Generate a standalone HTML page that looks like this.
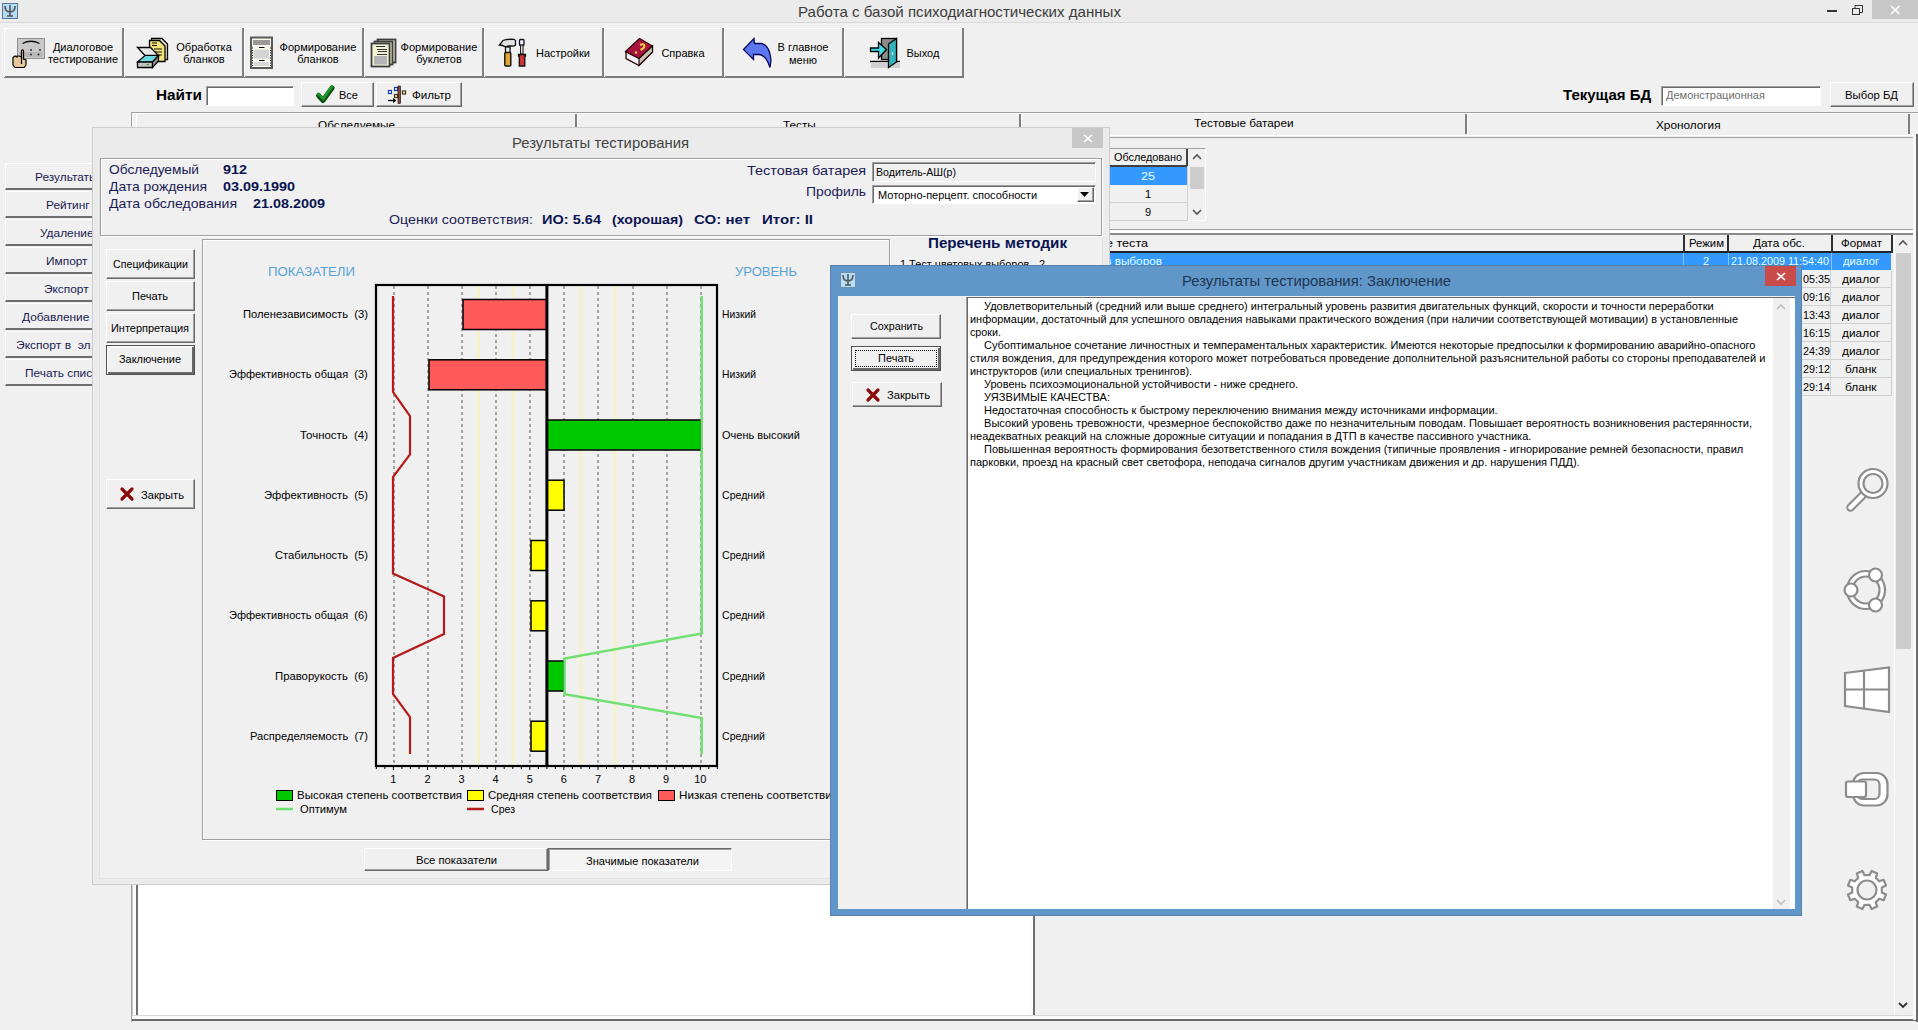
<!DOCTYPE html><html><head><meta charset="utf-8"><style>
*{margin:0;padding:0;box-sizing:border-box}
html,body{width:1918px;height:1030px;overflow:hidden;background:#f0f0f0;font-family:"Liberation Sans",sans-serif;position:relative}
.t{position:absolute;white-space:pre;line-height:20px;transform-origin:0 0}
.btn{position:absolute;background:#f0f0f0;border:1px solid;border-color:#fff #696969 #696969 #fff;box-shadow:inset -1px -1px 0 #a0a0a0}
.sunk{position:absolute;border:1px solid;border-color:#a0a0a0 #fff #fff #a0a0a0;box-shadow:inset 1px 1px 0 #696969}
svg{position:absolute;overflow:visible}
</style></head><body><div style="position:absolute;left:0px;top:0px;width:1918px;height:23px;background:#ebebeb;border-bottom:1px solid #d9d9d9"></div><div style="position:absolute;left:2px;top:3px;width:16px;height:16px;background:#b3dcf7;border:1px solid #55789a"></div><svg style="left:3px;top:4px" width="14" height="14" viewBox="0 0 14 14"><path d="M2 2 Q2 8 7 8 Q12 8 12 2 M7 1 V12 M4 12 H10" stroke="#555" stroke-width="1.6" fill="none"/></svg><div class="t" style="left:797.5px;top:1.5px;font-size:15px;color:#3c3c3c;transform:scaleX(1.0055);">Работа с базой психодиагностических данных</div><div style="position:absolute;left:1827px;top:10px;width:10px;height:2px;background:#333"></div><svg style="left:1852px;top:5px" width="11" height="11"><rect x="0.5" y="3.5" width="7" height="6" fill="none" stroke="#333"/><path d="M3 3.5 V0.5 H10.5 V7.5 H8" fill="none" stroke="#333"/></svg><div style="position:absolute;left:1872px;top:0px;width:46px;height:19px;background:#c7c7c7"></div><svg style="left:1890px;top:5px" width="11" height="10"><path d="M1 1 L9.5 9 M9.5 1 L1 9" stroke="#fff" stroke-width="1.7"/></svg><div style="position:absolute;left:4px;top:28px;width:960px;height:50px;background:#f0f0f0;border-top:1px solid #fff;border-bottom:2px solid #7a7a7a"></div><div style="position:absolute;left:4px;top:28px;width:1px;height:49px;background:#fff"></div><div style="position:absolute;left:122px;top:28px;width:2px;height:49px;background:#7f7f7f"></div><div style="position:absolute;left:124px;top:28px;width:1px;height:49px;background:#fff"></div><div style="position:absolute;left:242px;top:28px;width:2px;height:49px;background:#7f7f7f"></div><div style="position:absolute;left:244px;top:28px;width:1px;height:49px;background:#fff"></div><div style="position:absolute;left:362px;top:28px;width:2px;height:49px;background:#7f7f7f"></div><div style="position:absolute;left:364px;top:28px;width:1px;height:49px;background:#fff"></div><div style="position:absolute;left:482px;top:28px;width:2px;height:49px;background:#7f7f7f"></div><div style="position:absolute;left:484px;top:28px;width:1px;height:49px;background:#fff"></div><div style="position:absolute;left:602px;top:28px;width:2px;height:49px;background:#7f7f7f"></div><div style="position:absolute;left:604px;top:28px;width:1px;height:49px;background:#fff"></div><div style="position:absolute;left:722px;top:28px;width:2px;height:49px;background:#7f7f7f"></div><div style="position:absolute;left:724px;top:28px;width:1px;height:49px;background:#fff"></div><div style="position:absolute;left:842px;top:28px;width:2px;height:49px;background:#7f7f7f"></div><div style="position:absolute;left:844px;top:28px;width:1px;height:49px;background:#fff"></div><div style="position:absolute;left:962px;top:28px;width:2px;height:49px;background:#7f7f7f"></div><div class="t" style="left:52.9px;top:36.5px;font-size:11px;color:#000;">Диалоговое</div><div class="t" style="left:47.9px;top:48.5px;font-size:11px;color:#000;">тестирование</div><div class="t" style="left:176.3px;top:36.5px;font-size:11px;color:#000;">Обработка</div><div class="t" style="left:183.3px;top:48.5px;font-size:11px;color:#000;">бланков</div><div class="t" style="left:279.6px;top:36.5px;font-size:11px;color:#000;">Формирование</div><div class="t" style="left:297.3px;top:48.5px;font-size:11px;color:#000;">бланков</div><div class="t" style="left:400.6px;top:36.5px;font-size:11px;color:#000;">Формирование</div><div class="t" style="left:416.2px;top:48.5px;font-size:11px;color:#000;">буклетов</div><div class="t" style="left:536.0px;top:42.5px;font-size:11px;color:#000;">Настройки</div><div class="t" style="left:661.4px;top:42.5px;font-size:11px;color:#000;">Справка</div><div class="t" style="left:777.6px;top:36.5px;font-size:11px;color:#000;">В главное</div><div class="t" style="left:789.0px;top:49.5px;font-size:11px;color:#000;">меню</div><div class="t" style="left:906.5px;top:42.5px;font-size:11px;color:#000;">Выход</div><svg style="left:0;top:0" width="1918" height="100">
<!-- 1 meter + hand -->
<rect x="17.5" y="38.5" width="27" height="20" fill="#c9c9c9" stroke="#8f8f8f"/>
<rect x="19" y="52" width="24" height="5" fill="#b8b8b8"/>
<path d="M22.5 43.5 Q31 39 39.5 43.5" stroke="#111" stroke-width="1.3" fill="none"/>
<circle cx="31" cy="50" r="0.9" fill="#222"/><circle cx="40" cy="50" r="0.9" fill="#222"/>
<circle cx="31" cy="54.5" r="0.9" fill="#222"/><circle cx="38.5" cy="54.5" r="0.9" fill="#222"/>
<path d="M21.5 64 V50.5 Q22.5 49 23.5 50.5 V59 L26 60 V65 L24 67.5 H15 L13 65 V57.5 L15 56 L17 57 V56 L19 56 L21.5 57" fill="#e9c99a" stroke="#000" stroke-width="1.2"/>
<!-- 2 scanner + papers -->
<path d="M151.5 38.5 H162 L167.5 44 V59.5 H151.5 Z" fill="#e6e6c8" stroke="#000" stroke-width="1.3"/>
<path d="M149.5 40.5 H159.5 L165 46 V61.5 H149.5 Z" fill="#f2e47a" stroke="#000" stroke-width="1.3"/>
<path d="M152 43 H157 M152 45.5 H157 M154 49 H162 M154 52 H162 M158 55 H162" stroke="#111" stroke-width="1.1"/>
<path d="M137.5 47.5 H150.5 L158.5 55.5 H145 Z" fill="#e8e8e8" stroke="#000" stroke-width="1.3"/>
<path d="M145 55.5 H158.5 L152.5 62 H137.5 Z" fill="#6ad9e0" stroke="#000" stroke-width="1.2"/>
<path d="M137.5 62 H152.5 V67.5 H137.5 Z" fill="#c4c4c4" stroke="#000" stroke-width="1.3"/>
<path d="M152.5 62 L158.5 55.5 V61 L152.5 67.5 Z" fill="#909090" stroke="#000" stroke-width="1.2"/>
<rect x="146.5" y="64" width="2.5" height="1.2" fill="#3a3"/>
<!-- 3 blank form -->
<rect x="251" y="37.5" width="21" height="30.5" fill="#fbf8ef" stroke="#5a5a5a" stroke-width="2"/>
<rect x="253" y="40" width="17" height="5" fill="#9a9a9a"/>
<rect x="253.5" y="49.5" width="15.5" height="9" fill="#d4d4d4"/>
<rect x="253.5" y="62" width="15.5" height="4" fill="#d8d8d8"/>
<path d="M259 47.5 H264.5 M259 60.5 H264.5" stroke="#000" stroke-width="1.2"/>
<path d="M252.5 47.5 V66 M270.5 47.5 V66" stroke="#000" stroke-width="1" stroke-dasharray="1,1.5"/>
<!-- 4 booklets -->
<rect x="377.5" y="39.5" width="18" height="23" fill="#eef0d0" stroke="#3e3e3e" stroke-width="1.8"/>
<rect x="374.5" y="41.5" width="18" height="23" fill="#e4e8b8" stroke="#3e3e3e" stroke-width="1.8"/>
<rect x="371.5" y="43.5" width="18" height="23" fill="#f3f3d6" stroke="#3e3e3e" stroke-width="1.8"/>
<path d="M376 46.5 H385 M377 49.5 H387 M378 51.5 H387 M377 54.5 H387" stroke="#333" stroke-width="1"/>
<rect x="374" y="56" width="13" height="8.5" fill="#b4b4b4"/>
<!-- 5 tools -->
<path d="M499.5 45 L503 40.5 Q506 39 514 39.3 L515.5 40.5 V45 Q514 46.5 512 46 L508 46 L506 47 Q502 45 499.5 45 Z" fill="#e2e2e2" stroke="#111" stroke-width="1.3"/>
<rect x="505.5" y="47" width="4.5" height="6" fill="#eee" stroke="#111" stroke-width="1.3"/>
<rect x="504.8" y="52.5" width="6" height="13.5" rx="1" fill="#e4a634" stroke="#111" stroke-width="1.4"/>
<rect x="519.5" y="39.5" width="4.5" height="6" rx="1" fill="#eef" stroke="#111" stroke-width="1.3"/>
<rect x="520.6" y="45" width="2.4" height="9" fill="#fff" stroke="#111" stroke-width="1.1"/>
<path d="M518.5 54.5 H525.5 V56 H524.8 V66 H519.3 V56 H518.5 Z" fill="#cf3232" stroke="#111" stroke-width="1.3"/>
<!-- 6 book -->
<path d="M625.5 51.5 L639.5 38.5 L652.5 46 L639 58.5 Z" fill="#a8123e" stroke="#300" stroke-width="1.2"/>
<path d="M626 52 L639 58.5 L652.5 46 V52 L639 65.5 L626 58.5 Z" fill="#f4f0f8" stroke="#200" stroke-width="1.3"/>
<path d="M639 58.5 L652.5 46 V52 L639 65.5 Z" fill="#c8c0b0" stroke="#200" stroke-width="1.1"/>
<path d="M640 45 Q644 43 644.5 46 Q644 48.5 640.5 50" stroke="#f0d040" stroke-width="2" fill="none"/>
<circle cx="636" cy="52.5" r="1.2" fill="#f0d040"/>
<!-- 7 arrow -->
<path d="M743.5 49.5 L754 38.5 L754.5 43.5 H761.5 Q769.5 45 771 60 L770 67.5 Q766 55 759 54.5 H753.5 L753.5 59.5 Z" fill="#5b78f0" stroke="#0a0a60" stroke-width="1.3"/>
<!-- 8 door -->
<path d="M870 61.5 H900" stroke="#000" stroke-width="1.4"/>
<rect x="871" y="62" width="29" height="6" fill="#d0d0d0"/>
<rect x="881.5" y="38.5" width="15" height="21" fill="#8c8c8c" stroke="#000" stroke-width="1.3"/>
<path d="M888.5 44 L896.5 38.5 V62 L888.5 67.5 Z" fill="#35b4bc" stroke="#000" stroke-width="1.3"/>
<circle cx="892.5" cy="53.5" r="0.9" fill="#fff"/>
<path d="M870.5 48 H878.5 V42.5 L886.5 49.5 L878.5 58 V51.5 H870.5 Z" fill="#44dbe6" stroke="#000" stroke-width="1.3"/>
</svg><div class="t" style="left:156.0px;top:84.5px;font-size:15px;font-weight:bold;color:#000;transform:scaleX(1.0230);">Найти</div><div class="sunk" style="left:206px;top:86px;width:88px;height:20px;background:#fff;"></div><div class="btn" style="left:301px;top:82px;width:73px;height:25px;"></div><svg style="left:0;top:0" width="480" height="110"><path d="M318.5 95.5 L323 100.5 L332 88" stroke="#0c4f14" stroke-width="5" fill="none" stroke-linecap="round" stroke-linejoin="round"/><path d="M318.5 94 L323 99 L332 86.5" stroke="#1c9a2c" stroke-width="2.6" fill="none" stroke-linecap="round" stroke-linejoin="round"/></svg><div class="t" style="left:339.0px;top:84.5px;font-size:11px;color:#000;">Все</div><div class="btn" style="left:376px;top:82px;width:86px;height:25px;"></div><svg style="left:0;top:0" width="480" height="110"><rect x="388.5" y="90.5" width="3" height="3" fill="#fff" stroke="#1a3ab0" stroke-width="1.2"/><rect x="394.5" y="87.5" width="3" height="3" fill="#fff" stroke="#1a3ab0" stroke-width="1.2"/><rect x="394.5" y="94.5" width="3" height="3" fill="#fff" stroke="#403000" stroke-width="1.2"/><rect x="402.5" y="91" width="3" height="3" fill="#fff" stroke="#403000" stroke-width="1.2"/><rect x="398" y="86" width="2.5" height="17.5" fill="#8a4a3a" stroke="#000" stroke-width="0.6"/><path d="M388 100.5 H395" stroke="#000" stroke-width="1.3"/><path d="M393 98 L396.5 100.5 L393 103 Z" fill="#000"/></svg><div class="t" style="left:412.0px;top:84.5px;font-size:11px;color:#000;transform:scaleX(1.0554);">Фильтр</div><div class="t" style="left:1563.0px;top:84.5px;font-size:15px;font-weight:bold;color:#000;">Текущая БД</div><div class="sunk" style="left:1661px;top:86px;width:160px;height:20px;background:#fff;"></div><div class="t" style="left:1666.0px;top:84.5px;font-size:11px;color:#6d6d6d;">Демонстрационная</div><div class="btn" style="left:1830px;top:82px;width:84px;height:25px;"></div><div class="t" style="left:1845.0px;top:84.5px;font-size:11px;color:#000;transform:scaleX(1.0291);">Выбор БД</div><div style="position:absolute;left:131px;top:112px;width:1787px;height:910px;border-top:1px solid #a0a0a0;border-left:1px solid #a0a0a0;background:#f0f0f0"></div><div style="position:absolute;left:132px;top:113px;width:1786px;height:908px;border-top:1px solid #fff;border-left:1px solid #fff"></div><div style="position:absolute;left:136px;top:114px;width:441px;height:20px;border-left:1px solid #fff;border-right:2px solid #7f7f7f;"></div><div class="t" style="left:318.0px;top:114.5px;font-size:11px;color:#000;transform:scaleX(1.0700);">Обследуемые</div><div style="position:absolute;left:577px;top:114px;width:444px;height:20px;border-left:1px solid #fff;border-right:2px solid #7f7f7f;"></div><div class="t" style="left:782.6px;top:114.5px;font-size:11px;color:#000;transform:scaleX(1.0700);">Тесты</div><div style="position:absolute;left:1021px;top:114px;width:446px;height:20px;border-left:1px solid #fff;border-right:2px solid #7f7f7f;"></div><div class="t" style="left:1194.2px;top:112.5px;font-size:11px;color:#000;transform:scaleX(1.0700);">Тестовые батареи</div><div style="position:absolute;left:1467px;top:114px;width:443px;height:20px;border-left:1px solid #fff;border-right:2px solid #7f7f7f;"></div><div class="t" style="left:1656.2px;top:114.5px;font-size:11px;color:#000;transform:scaleX(1.0700);">Хронология</div><div style="position:absolute;left:132px;top:135px;width:1782px;height:1px;background:#fff"></div><div style="position:absolute;left:132px;top:137px;width:1782px;height:1px;background:#a0a0a0"></div><div style="position:absolute;left:5px;top:163px;width:125px;height:27px;border-top:1px solid #fff;border-left:1px solid #fff;border-bottom:2px solid #6e6e6e;background:#f0f0f0"></div><div class="t" style="left:35.0px;top:166.5px;font-size:11px;color:#1a1a50;transform:scaleX(1.0800);">Результаты</div><div style="position:absolute;left:5px;top:191px;width:125px;height:27px;border-top:1px solid #fff;border-left:1px solid #fff;border-bottom:2px solid #6e6e6e;background:#f0f0f0"></div><div class="t" style="left:46.0px;top:194.5px;font-size:11px;color:#1a1a50;transform:scaleX(1.0800);">Рейтинг</div><div style="position:absolute;left:5px;top:219px;width:125px;height:27px;border-top:1px solid #fff;border-left:1px solid #fff;border-bottom:2px solid #6e6e6e;background:#f0f0f0"></div><div class="t" style="left:40.0px;top:222.5px;font-size:11px;color:#1a1a50;transform:scaleX(1.0800);">Удаление</div><div style="position:absolute;left:5px;top:247px;width:125px;height:27px;border-top:1px solid #fff;border-left:1px solid #fff;border-bottom:2px solid #6e6e6e;background:#f0f0f0"></div><div class="t" style="left:46.0px;top:250.5px;font-size:11px;color:#1a1a50;transform:scaleX(1.0800);">Импорт</div><div style="position:absolute;left:5px;top:275px;width:125px;height:27px;border-top:1px solid #fff;border-left:1px solid #fff;border-bottom:2px solid #6e6e6e;background:#f0f0f0"></div><div class="t" style="left:44.0px;top:278.5px;font-size:11px;color:#1a1a50;transform:scaleX(1.0800);">Экспорт</div><div style="position:absolute;left:5px;top:303px;width:125px;height:27px;border-top:1px solid #fff;border-left:1px solid #fff;border-bottom:2px solid #6e6e6e;background:#f0f0f0"></div><div class="t" style="left:22.0px;top:306.5px;font-size:11px;color:#1a1a50;transform:scaleX(1.0800);">Добавление в...</div><div style="position:absolute;left:5px;top:331px;width:125px;height:27px;border-top:1px solid #fff;border-left:1px solid #fff;border-bottom:2px solid #6e6e6e;background:#f0f0f0"></div><div class="t" style="left:16.0px;top:334.5px;font-size:11px;color:#1a1a50;transform:scaleX(1.0956);">Экспорт в  эл.т...</div><div style="position:absolute;left:5px;top:359px;width:125px;height:27px;border-top:1px solid #fff;border-left:1px solid #fff;border-bottom:2px solid #6e6e6e;background:#f0f0f0"></div><div class="t" style="left:25.0px;top:362.5px;font-size:11px;color:#1a1a50;transform:scaleX(1.0800);">Печать списк...</div><div style="position:absolute;left:1109px;top:148px;width:97px;height:73px;background:#f0f0f0;border:1px solid;border-color:#a0a0a0 #fff #fff #a0a0a0"></div><div style="position:absolute;left:1109px;top:149px;width:79px;height:18px;background:#f0f0f0;border-right:2px solid #404040;border-bottom:2px solid #404040"></div><div class="t" style="left:1114.0px;top:146.5px;font-size:11px;color:#000;transform:scaleX(0.9842);">Обследовано</div><div style="position:absolute;left:1109px;top:167px;width:79px;height:18px;background:#3399ff"></div><div class="t" style="left:1141.0px;top:165.5px;font-size:11px;color:#e8ffff;transform:scaleX(1.1443);">25</div><div style="position:absolute;left:1109px;top:185px;width:79px;height:18px;border-bottom:1px solid #d0d0d0"></div><div class="t" style="left:1144.9px;top:183.5px;font-size:11px;color:#000;">1</div><div style="position:absolute;left:1109px;top:203px;width:79px;height:18px;border-bottom:1px solid #d0d0d0"></div><div class="t" style="left:1144.9px;top:201.5px;font-size:11px;color:#000;">9</div><div style="position:absolute;left:1187px;top:166px;width:1px;height:54px;background:#d0d0d0"></div><div style="position:absolute;left:1188px;top:149px;width:17px;height:71px;background:#f0f0f0"></div><div style="position:absolute;left:1190px;top:167px;width:14px;height:22px;background:#cdcdcd"></div><svg style="left:1192px;top:153px" width="10" height="8"><path d="M1 6 L5 2 L9 6" stroke="#555" stroke-width="1.6" fill="none"/></svg><svg style="left:1192px;top:208px" width="10" height="8"><path d="M1 2 L5 6 L9 2" stroke="#555" stroke-width="1.6" fill="none"/></svg><div style="position:absolute;left:1109px;top:229px;width:805px;height:1px;background:#a0a0a0"></div><div style="position:absolute;left:1109px;top:230px;width:805px;height:5px;background:#fff;border-top:1px solid #f8f8f8;border-bottom:2px solid #8a8a8a"></div><div style="position:absolute;left:1109px;top:235px;width:784px;height:18px;background:#f0f0f0;border-bottom:2px solid #202030"></div><div style="position:absolute;left:1683px;top:235px;width:2px;height:18px;background:#303030"></div><div style="position:absolute;left:1727px;top:235px;width:2px;height:18px;background:#303030"></div><div style="position:absolute;left:1831px;top:235px;width:2px;height:18px;background:#303030"></div><div style="position:absolute;left:1891px;top:235px;width:2px;height:18px;background:#303030"></div><div class="t" style="left:1106.0px;top:232.5px;font-size:11px;color:#000;transform:scaleX(1.1433);">е теста</div><div class="t" style="left:1688.5px;top:232.5px;font-size:11px;color:#000;transform:scaleX(1.0320);">Режим</div><div class="t" style="left:1753.0px;top:232.5px;font-size:11px;color:#000;transform:scaleX(1.0774);">Дата обс.</div><div class="t" style="left:1840.5px;top:232.5px;font-size:11px;color:#000;transform:scaleX(1.0493);">Формат</div><div style="position:absolute;left:1109px;top:253px;width:782px;height:17px;background:#3399ff"></div><div class="t" style="left:1106.0px;top:250.5px;font-size:11px;color:#e8ffff;transform:scaleX(1.0698);">з выборов</div><div class="t" style="left:1702.9px;top:250.5px;font-size:11px;color:#e8ffff;">2</div><div style="position:absolute;left:1683px;top:253px;width:1px;height:17px;background:#8cc4f8"></div><div style="position:absolute;left:1728px;top:253px;width:1px;height:17px;background:#8cc4f8"></div><div style="position:absolute;left:1831px;top:253px;width:1px;height:17px;background:#8cc4f8"></div><div class="t" style="left:1731.0px;top:250.5px;font-size:11px;color:#e8ffff;transform:scaleX(0.9790);">21.08.2009 11:54:40</div><div class="t" style="left:1843.0px;top:250.5px;font-size:11px;color:#e8ffff;transform:scaleX(1.0183);">диалог</div><div style="position:absolute;left:1802px;top:270px;width:90px;height:18px;border-bottom:1px solid #d0d0d0"></div><div style="position:absolute;left:1830px;top:270px;width:1px;height:18px;background:#d0d0d0"></div><div style="position:absolute;left:1891px;top:270px;width:1px;height:18px;background:#d0d0d0"></div><div class="t" style="left:1803.0px;top:268.5px;font-size:11px;color:#000;transform:scaleX(0.9809);">05:35</div><div class="t" style="left:1841.9px;top:268.5px;font-size:11px;color:#000;transform:scaleX(1.0800);">диалог</div><div style="position:absolute;left:1802px;top:288px;width:90px;height:18px;border-bottom:1px solid #d0d0d0"></div><div style="position:absolute;left:1830px;top:288px;width:1px;height:18px;background:#d0d0d0"></div><div style="position:absolute;left:1891px;top:288px;width:1px;height:18px;background:#d0d0d0"></div><div class="t" style="left:1803.0px;top:286.5px;font-size:11px;color:#000;transform:scaleX(0.9809);">09:16</div><div class="t" style="left:1841.9px;top:286.5px;font-size:11px;color:#000;transform:scaleX(1.0800);">диалог</div><div style="position:absolute;left:1802px;top:306px;width:90px;height:18px;border-bottom:1px solid #d0d0d0"></div><div style="position:absolute;left:1830px;top:306px;width:1px;height:18px;background:#d0d0d0"></div><div style="position:absolute;left:1891px;top:306px;width:1px;height:18px;background:#d0d0d0"></div><div class="t" style="left:1803.0px;top:304.5px;font-size:11px;color:#000;transform:scaleX(0.9809);">13:43</div><div class="t" style="left:1841.9px;top:304.5px;font-size:11px;color:#000;transform:scaleX(1.0800);">диалог</div><div style="position:absolute;left:1802px;top:324px;width:90px;height:18px;border-bottom:1px solid #d0d0d0"></div><div style="position:absolute;left:1830px;top:324px;width:1px;height:18px;background:#d0d0d0"></div><div style="position:absolute;left:1891px;top:324px;width:1px;height:18px;background:#d0d0d0"></div><div class="t" style="left:1803.0px;top:322.5px;font-size:11px;color:#000;transform:scaleX(0.9809);">16:15</div><div class="t" style="left:1841.9px;top:322.5px;font-size:11px;color:#000;transform:scaleX(1.0800);">диалог</div><div style="position:absolute;left:1802px;top:342px;width:90px;height:18px;border-bottom:1px solid #d0d0d0"></div><div style="position:absolute;left:1830px;top:342px;width:1px;height:18px;background:#d0d0d0"></div><div style="position:absolute;left:1891px;top:342px;width:1px;height:18px;background:#d0d0d0"></div><div class="t" style="left:1803.0px;top:340.5px;font-size:11px;color:#000;transform:scaleX(0.9809);">24:39</div><div class="t" style="left:1841.9px;top:340.5px;font-size:11px;color:#000;transform:scaleX(1.0800);">диалог</div><div style="position:absolute;left:1802px;top:360px;width:90px;height:18px;border-bottom:1px solid #d0d0d0"></div><div style="position:absolute;left:1830px;top:360px;width:1px;height:18px;background:#d0d0d0"></div><div style="position:absolute;left:1891px;top:360px;width:1px;height:18px;background:#d0d0d0"></div><div class="t" style="left:1803.0px;top:358.5px;font-size:11px;color:#000;transform:scaleX(0.9809);">29:12</div><div class="t" style="left:1845.2px;top:358.5px;font-size:11px;color:#000;transform:scaleX(1.0800);">бланк</div><div style="position:absolute;left:1802px;top:378px;width:90px;height:18px;border-bottom:1px solid #d0d0d0"></div><div style="position:absolute;left:1830px;top:378px;width:1px;height:18px;background:#d0d0d0"></div><div style="position:absolute;left:1891px;top:378px;width:1px;height:18px;background:#d0d0d0"></div><div class="t" style="left:1803.0px;top:376.5px;font-size:11px;color:#000;transform:scaleX(0.9809);">29:14</div><div class="t" style="left:1845.2px;top:376.5px;font-size:11px;color:#000;transform:scaleX(1.0800);">бланк</div><div style="position:absolute;left:1894px;top:235px;width:19px;height:781px;background:#f0f0f0;border-left:1px solid #fff"></div><div style="position:absolute;left:1896px;top:253px;width:15px;height:396px;background:#cdcdcd"></div><svg style="left:1898px;top:239px" width="10" height="8"><path d="M1 6 L5 2 L9 6" stroke="#555" stroke-width="1.6" fill="none"/></svg><svg style="left:1898px;top:1001px" width="10" height="8"><path d="M1 2 L5 6 L9 2" stroke="#333" stroke-width="1.8" fill="none"/></svg><div style="position:absolute;left:132px;top:880px;width:901px;height:135px;background:#fff"></div><div style="position:absolute;left:132px;top:880px;width:1px;height:140px;background:#c8c8c8"></div><div style="position:absolute;left:133px;top:880px;width:3px;height:140px;background:#fafafa"></div><div style="position:absolute;left:136px;top:880px;width:2px;height:135px;background:#6e6e6e"></div><div style="position:absolute;left:1031px;top:880px;width:2px;height:135px;background:#fafafa"></div><div style="position:absolute;left:1033px;top:880px;width:2px;height:135px;background:#6e6e6e"></div><div style="position:absolute;left:132px;top:1015px;width:1785px;height:6px;background:#fafafa;border-top:1px solid #d8d8d8;border-bottom:2px solid #6a6a6a"></div><div style="position:absolute;left:1913px;top:137px;width:3px;height:883px;background:#fafafa"></div><div style="position:absolute;left:1916px;top:134px;width:2px;height:888px;background:#6a6a6a"></div><div style="position:absolute;left:92px;top:127px;width:1018px;height:758px;background:#ebebeb;border:1px solid #cdcdcd"></div><div class="t" style="left:511.5px;top:132.5px;font-size:15px;color:#444;transform:scaleX(0.9912);">Результаты тестирования</div><div style="position:absolute;left:1072px;top:128px;width:31px;height:20px;background:#c7c7c7"></div><svg style="left:1083px;top:134px" width="11" height="10"><path d="M1 1 L9 8 M9 1 L1 8" stroke="#fff" stroke-width="1.6"/></svg><div style="position:absolute;left:99px;top:158px;width:1004px;height:721px;background:#f0f0f0;border:1px solid;border-color:#e2e2e2"></div><div style="position:absolute;left:100px;top:158px;width:1002px;height:78px;border:1px solid #a0a0a0;box-shadow:inset 1px 1px 0 #fff,1px 1px 0 #fff"></div><div class="t" style="left:109.0px;top:159.5px;font-size:13px;color:#1b1b55;transform:scaleX(1.0569);">Обследуемый</div><div class="t" style="left:223.0px;top:159.5px;font-size:13px;font-weight:bold;color:#0a1450;transform:scaleX(1.1065);">912</div><div class="t" style="left:109.0px;top:176.5px;font-size:13px;color:#1b1b55;transform:scaleX(1.0686);">Дата рождения</div><div class="t" style="left:223.0px;top:176.5px;font-size:13px;font-weight:bold;color:#0a1450;transform:scaleX(1.1066);">03.09.1990</div><div class="t" style="left:109.0px;top:193.5px;font-size:13px;color:#1b1b55;transform:scaleX(1.0825);">Дата обследования</div><div class="t" style="left:253.0px;top:193.5px;font-size:13px;font-weight:bold;color:#0a1450;transform:scaleX(1.1066);">21.08.2009</div><div class="t" style="left:389.0px;top:209.5px;font-size:13px;color:#1b1b55;transform:scaleX(1.0926);">Оценки соответствия:</div><div class="t" style="left:542.0px;top:209.5px;font-size:13px;font-weight:bold;color:#0a1450;transform:scaleX(1.1195);">ИО: 5.64</div><div class="t" style="left:612.0px;top:209.5px;font-size:13px;font-weight:bold;color:#0a1450;transform:scaleX(1.0917);">(хорошая)</div><div class="t" style="left:694.0px;top:209.5px;font-size:13px;font-weight:bold;color:#0a1450;transform:scaleX(1.1571);">СО: нет</div><div class="t" style="left:762.0px;top:209.5px;font-size:13px;font-weight:bold;color:#0a1450;transform:scaleX(1.1575);">Итог: II</div><div class="t" style="left:747.0px;top:160.5px;font-size:13px;color:#1b1b55;transform:scaleX(1.1096);">Тестовая батарея</div><div class="t" style="left:806.0px;top:181.5px;font-size:13px;color:#1b1b55;transform:scaleX(1.0691);">Профиль</div><div class="sunk" style="left:872px;top:162px;width:224px;height:20px;background:#f0f0f0;"></div><div class="t" style="left:876.0px;top:161.5px;font-size:11px;color:#000;transform:scaleX(0.9625);">Водитель-АШ(р)</div><div class="sunk" style="left:872px;top:185px;width:224px;height:19px;background:#fff;"></div><div class="t" style="left:878.0px;top:184.5px;font-size:11px;color:#000;">Моторно-перцепт. способности</div><div class="btn" style="left:1077px;top:187px;width:17px;height:15px;"></div><svg style="left:1080px;top:192px" width="10" height="6"><path d="M0 0 H9 L4.5 5 Z" fill="#000"/></svg><div class="btn" style="left:106px;top:249px;width:89px;height:30px;"></div><div class="t" style="left:112.5px;top:253.5px;font-size:11px;color:#000;transform:scaleX(0.9687);">Спецификации</div><div class="btn" style="left:106px;top:281px;width:89px;height:30px;"></div><div class="t" style="left:132.0px;top:285.5px;font-size:11px;color:#000;">Печать</div><div class="btn" style="left:106px;top:313px;width:89px;height:30px;"></div><div class="t" style="left:111.0px;top:317.5px;font-size:11px;color:#000;transform:scaleX(0.9951);">Интерпретация</div><div class="btn" style="left:106px;top:345px;width:89px;height:30px;border-color:#505050;box-shadow:inset 1px 1px 0 #fff,inset -2px -2px 0 #696969"></div><div class="t" style="left:119.0px;top:348.5px;font-size:11px;color:#000;transform:scaleX(0.9950);">Заключение</div><div class="btn" style="left:106px;top:479px;width:89px;height:30px;"></div><svg style="left:120px;top:487px" width="14" height="14" viewBox="0 0 14 14"><path d="M2 2 L12 12 M12 2 L2 12" stroke="#8a0a0a" stroke-width="3.2" stroke-linecap="round"/></svg><div class="t" style="left:141.0px;top:484.5px;font-size:11px;color:#000;transform:scaleX(1.0150);">Закрыть</div><div style="position:absolute;left:202px;top:239px;width:688px;height:601px;border:1px solid #a0a0a0;box-shadow:inset 1px 1px 0 #fff,1px 1px 0 #fff"></div><div class="t" style="left:268.0px;top:261.5px;font-size:13px;color:#58a0d8;transform:scaleX(1.0170);">ПОКАЗАТЕЛИ</div><div class="t" style="left:735.0px;top:261.5px;font-size:13px;color:#58a0d8;">УРОВЕНЬ</div><div class="t" style="left:928.0px;top:232.5px;font-size:14px;font-weight:bold;color:#0a1450;transform:scaleX(1.0842);">Перечень методик</div><div class="t" style="left:900.0px;top:253.5px;font-size:11px;color:#000;transform:scaleX(0.9916);">1 Тест цветовых выборов - 2</div><div style="position:absolute;left:364px;top:848px;width:184px;height:23px;background:#f0f0f0;border:1px solid;border-color:#fff #696969 #696969 #fff;box-shadow:inset -1px -1px 0 #a0a0a0"></div><div class="t" style="left:415.5px;top:849.5px;font-size:11px;color:#000;transform:scaleX(1.0217);">Все показатели</div><div style="position:absolute;left:548px;top:848px;width:184px;height:23px;background:#f4f4f4;border:1px solid;border-color:#696969 #fff #fff #696969;box-shadow:inset 1px 1px 0 #a0a0a0"></div><div class="t" style="left:585.5px;top:850.5px;font-size:11px;color:#000;transform:scaleX(1.0055);">Значимые показатели</div><svg style="left:0;top:0" width="1918" height="1030"><line x1="478.6" y1="286" x2="478.6" y2="764" stroke="#f6f1c6" stroke-width="3"/><line x1="512.8" y1="286" x2="512.8" y2="764" stroke="#f6f1c6" stroke-width="3"/><line x1="581.0" y1="286" x2="581.0" y2="764" stroke="#f6f1c6" stroke-width="3"/><line x1="615.0" y1="286" x2="615.0" y2="764" stroke="#f6f1c6" stroke-width="3"/><line x1="394" y1="286" x2="394" y2="764" stroke="#585858" stroke-width="1" stroke-dasharray="3,3"/><line x1="428" y1="286" x2="428" y2="764" stroke="#585858" stroke-width="1" stroke-dasharray="3,3"/><line x1="462" y1="286" x2="462" y2="764" stroke="#585858" stroke-width="1" stroke-dasharray="3,3"/><line x1="496" y1="286" x2="496" y2="764" stroke="#585858" stroke-width="1" stroke-dasharray="3,3"/><line x1="530" y1="286" x2="530" y2="764" stroke="#585858" stroke-width="1" stroke-dasharray="3,3"/><line x1="564" y1="286" x2="564" y2="764" stroke="#585858" stroke-width="1" stroke-dasharray="3,3"/><line x1="598" y1="286" x2="598" y2="764" stroke="#585858" stroke-width="1" stroke-dasharray="3,3"/><line x1="633" y1="286" x2="633" y2="764" stroke="#585858" stroke-width="1" stroke-dasharray="3,3"/><line x1="667" y1="286" x2="667" y2="764" stroke="#585858" stroke-width="1" stroke-dasharray="3,3"/><line x1="701" y1="286" x2="701" y2="764" stroke="#585858" stroke-width="1" stroke-dasharray="3,3"/><rect x="463" y="299.5" width="84" height="30" fill="#ff5a5a" stroke="#000" stroke-width="1.5"/><rect x="429" y="359.8" width="118" height="30" fill="#ff5a5a" stroke="#000" stroke-width="1.5"/><rect x="547" y="420.0" width="154" height="30" fill="#00c800" stroke="#000" stroke-width="1.5"/><rect x="547" y="480.2" width="17" height="30" fill="#ffff00" stroke="#000" stroke-width="1.5"/><rect x="531" y="540.5" width="16" height="30" fill="#ffff00" stroke="#000" stroke-width="1.5"/><rect x="531" y="600.8" width="16" height="30" fill="#ffff00" stroke="#000" stroke-width="1.5"/><rect x="547" y="661.0" width="17" height="30" fill="#00c800" stroke="#000" stroke-width="1.5"/><rect x="531" y="721.2" width="16" height="30" fill="#ffff00" stroke="#000" stroke-width="1.5"/><line x1="546.9" y1="284" x2="546.9" y2="766" stroke="#000" stroke-width="3"/><polyline points="393,296 393,392 410,416 410,454.5 393,477 393,573.6 444,596.5 444,634 393,658 393,694 410,717 410,754" fill="none" stroke="#b41c1c" stroke-width="2.2"/><polyline points="701.7,296 701.7,633.5 564.6,658.5 564.6,694.3 701.7,718 701.7,754" fill="none" stroke="#70e070" stroke-width="2.5"/><rect x="376" y="285" width="341" height="481" fill="none" stroke="#000" stroke-width="2.2"/><line x1="376.3" y1="766" x2="376.3" y2="769" stroke="#000" stroke-width="1"/><line x1="384.9" y1="766" x2="384.9" y2="769" stroke="#000" stroke-width="1"/><line x1="393.4" y1="766" x2="393.4" y2="770" stroke="#000" stroke-width="1"/><line x1="401.9" y1="766" x2="401.9" y2="769" stroke="#000" stroke-width="1"/><line x1="410.4" y1="766" x2="410.4" y2="769" stroke="#000" stroke-width="1"/><line x1="419.0" y1="766" x2="419.0" y2="769" stroke="#000" stroke-width="1"/><line x1="427.5" y1="766" x2="427.5" y2="770" stroke="#000" stroke-width="1"/><line x1="436.0" y1="766" x2="436.0" y2="769" stroke="#000" stroke-width="1"/><line x1="444.5" y1="766" x2="444.5" y2="769" stroke="#000" stroke-width="1"/><line x1="453.1" y1="766" x2="453.1" y2="769" stroke="#000" stroke-width="1"/><line x1="461.6" y1="766" x2="461.6" y2="770" stroke="#000" stroke-width="1"/><line x1="470.1" y1="766" x2="470.1" y2="769" stroke="#000" stroke-width="1"/><line x1="478.6" y1="766" x2="478.6" y2="769" stroke="#000" stroke-width="1"/><line x1="487.2" y1="766" x2="487.2" y2="769" stroke="#000" stroke-width="1"/><line x1="495.7" y1="766" x2="495.7" y2="770" stroke="#000" stroke-width="1"/><line x1="504.2" y1="766" x2="504.2" y2="769" stroke="#000" stroke-width="1"/><line x1="512.8" y1="766" x2="512.8" y2="769" stroke="#000" stroke-width="1"/><line x1="521.3" y1="766" x2="521.3" y2="769" stroke="#000" stroke-width="1"/><line x1="529.8" y1="766" x2="529.8" y2="770" stroke="#000" stroke-width="1"/><line x1="538.3" y1="766" x2="538.3" y2="769" stroke="#000" stroke-width="1"/><line x1="546.9" y1="766" x2="546.9" y2="769" stroke="#000" stroke-width="1"/><line x1="555.4" y1="766" x2="555.4" y2="769" stroke="#000" stroke-width="1"/><line x1="563.9" y1="766" x2="563.9" y2="770" stroke="#000" stroke-width="1"/><line x1="572.4" y1="766" x2="572.4" y2="769" stroke="#000" stroke-width="1"/><line x1="581.0" y1="766" x2="581.0" y2="769" stroke="#000" stroke-width="1"/><line x1="589.5" y1="766" x2="589.5" y2="769" stroke="#000" stroke-width="1"/><line x1="598.0" y1="766" x2="598.0" y2="770" stroke="#000" stroke-width="1"/><line x1="606.5" y1="766" x2="606.5" y2="769" stroke="#000" stroke-width="1"/><line x1="615.0" y1="766" x2="615.0" y2="769" stroke="#000" stroke-width="1"/><line x1="623.6" y1="766" x2="623.6" y2="769" stroke="#000" stroke-width="1"/><line x1="632.1" y1="766" x2="632.1" y2="770" stroke="#000" stroke-width="1"/><line x1="640.6" y1="766" x2="640.6" y2="769" stroke="#000" stroke-width="1"/><line x1="649.1" y1="766" x2="649.1" y2="769" stroke="#000" stroke-width="1"/><line x1="657.7" y1="766" x2="657.7" y2="769" stroke="#000" stroke-width="1"/><line x1="666.2" y1="766" x2="666.2" y2="770" stroke="#000" stroke-width="1"/><line x1="674.7" y1="766" x2="674.7" y2="769" stroke="#000" stroke-width="1"/><line x1="683.2" y1="766" x2="683.2" y2="769" stroke="#000" stroke-width="1"/><line x1="691.8" y1="766" x2="691.8" y2="769" stroke="#000" stroke-width="1"/><line x1="700.3" y1="766" x2="700.3" y2="770" stroke="#000" stroke-width="1"/><line x1="708.8" y1="766" x2="708.8" y2="769" stroke="#000" stroke-width="1"/><line x1="717.3" y1="766" x2="717.3" y2="769" stroke="#000" stroke-width="1"/><rect x="276.5" y="790.5" width="16" height="10" fill="#00c800" stroke="#000"/><rect x="467.5" y="790.5" width="16" height="10" fill="#ffff00" stroke="#000"/><rect x="658.5" y="790.5" width="16" height="10" fill="#ff5a5a" stroke="#000"/><line x1="276" y1="809" x2="293" y2="809" stroke="#70e070" stroke-width="2.5"/><line x1="467" y1="809" x2="484" y2="809" stroke="#b41c1c" stroke-width="2.5"/></svg><div class="t" style="left:390.3px;top:768.5px;font-size:11px;color:#000;">1</div><div class="t" style="left:424.4px;top:768.5px;font-size:11px;color:#000;">2</div><div class="t" style="left:458.5px;top:768.5px;font-size:11px;color:#000;">3</div><div class="t" style="left:492.6px;top:768.5px;font-size:11px;color:#000;">4</div><div class="t" style="left:526.7px;top:768.5px;font-size:11px;color:#000;">5</div><div class="t" style="left:560.8px;top:768.5px;font-size:11px;color:#000;">6</div><div class="t" style="left:594.9px;top:768.5px;font-size:11px;color:#000;">7</div><div class="t" style="left:629.0px;top:768.5px;font-size:11px;color:#000;">8</div><div class="t" style="left:663.1px;top:768.5px;font-size:11px;color:#000;">9</div><div class="t" style="left:694.2px;top:768.5px;font-size:11px;color:#000;">10</div><div class="t" style="left:243.0px;top:304.0px;font-size:11px;color:#000;transform:scaleX(1.0199);">Поленезависимость  (3)</div><div class="t" style="left:722.0px;top:304.0px;font-size:11px;color:#000;transform:scaleX(0.9383);">Низкий</div><div class="t" style="left:229.0px;top:364.2px;font-size:11px;color:#000;">Эффективность общая  (3)</div><div class="t" style="left:722.0px;top:364.2px;font-size:11px;color:#000;transform:scaleX(0.9383);">Низкий</div><div class="t" style="left:300.0px;top:424.5px;font-size:11px;color:#000;transform:scaleX(1.0385);">Точность  (4)</div><div class="t" style="left:722.0px;top:424.5px;font-size:11px;color:#000;">Очень высокий</div><div class="t" style="left:264.0px;top:484.8px;font-size:11px;color:#000;transform:scaleX(1.0186);">Эффективность  (5)</div><div class="t" style="left:722.0px;top:484.8px;font-size:11px;color:#000;transform:scaleX(0.9615);">Средний</div><div class="t" style="left:275.0px;top:545.0px;font-size:11px;color:#000;transform:scaleX(1.0154);">Стабильность  (5)</div><div class="t" style="left:722.0px;top:545.0px;font-size:11px;color:#000;transform:scaleX(0.9615);">Средний</div><div class="t" style="left:229.0px;top:605.2px;font-size:11px;color:#000;">Эффективность общая  (6)</div><div class="t" style="left:722.0px;top:605.2px;font-size:11px;color:#000;transform:scaleX(0.9615);">Средний</div><div class="t" style="left:275.0px;top:665.5px;font-size:11px;color:#000;transform:scaleX(1.0293);">Праворукость  (6)</div><div class="t" style="left:722.0px;top:665.5px;font-size:11px;color:#000;transform:scaleX(0.9615);">Средний</div><div class="t" style="left:250.0px;top:725.8px;font-size:11px;color:#000;transform:scaleX(1.0111);">Распределяемость  (7)</div><div class="t" style="left:722.0px;top:725.8px;font-size:11px;color:#000;transform:scaleX(0.9615);">Средний</div><div class="t" style="left:297.0px;top:784.5px;font-size:11px;color:#000;transform:scaleX(1.0433);">Высокая степень соответствия</div><div class="t" style="left:488.0px;top:784.5px;font-size:11px;color:#000;transform:scaleX(1.0354);">Средняя степень соответствия</div><div class="t" style="left:679.0px;top:784.5px;font-size:11px;color:#000;transform:scaleX(1.0578);">Низкая степень соответствия</div><div class="t" style="left:300.0px;top:798.5px;font-size:11px;color:#000;transform:scaleX(1.0147);">Оптимум</div><div class="t" style="left:491.0px;top:798.5px;font-size:11px;color:#000;transform:scaleX(0.9608);">Срез</div><div style="position:absolute;left:830px;top:265px;width:972px;height:651px;background:#6097c8;border:1px solid #5580ab"></div><div style="position:absolute;left:840px;top:272px;width:16px;height:16px;background:#b3dcf7;border:1px solid #6d8fae"></div><svg style="left:841px;top:273px" width="14" height="14" viewBox="0 0 14 14"><path d="M2 2 Q2 8 7 8 Q12 8 12 2 M7 1 V12 M4 12 H10" stroke="#555" stroke-width="1.6" fill="none"/></svg><div class="t" style="left:1181.5px;top:270.5px;font-size:15px;color:#1f3550;transform:scaleX(0.9894);">Результаты тестирования: Заключение</div><div style="position:absolute;left:1765px;top:266px;width:31px;height:20px;background:#c94c4b"></div><svg style="left:1776px;top:272px" width="11" height="10"><path d="M1 1 L9 8 M9 1 L1 8" stroke="#fff" stroke-width="1.6"/></svg><div style="position:absolute;left:838px;top:296px;width:957px;height:613px;background:#f0f0f0"></div><div style="position:absolute;left:966px;top:297px;width:829px;height:612px;background:#fff;border-left:1px solid #a0a0a0;box-shadow:inset 1px 1px 0 #696969"></div><div style="position:absolute;left:1773px;top:298px;width:17px;height:611px;background:#f0f0f0"></div><svg style="left:1776px;top:303px" width="10" height="8"><path d="M1 6 L5 2 L9 6" stroke="#c0c0c0" stroke-width="1.6" fill="none"/></svg><svg style="left:1776px;top:898px" width="10" height="8"><path d="M1 2 L5 6 L9 2" stroke="#c0c0c0" stroke-width="1.6" fill="none"/></svg><div class="btn" style="left:851px;top:314px;width:90px;height:25px;"></div><div class="t" style="left:869.5px;top:315.5px;font-size:11px;color:#000;transform:scaleX(0.9696);">Сохранить</div><div style="position:absolute;left:851px;top:346px;width:90px;height:25px;background:#f0f0f0;border:1px solid #505050;box-shadow:inset 1px 1px 0 #fff,inset -2px -2px 0 #696969"></div><div style="position:absolute;left:855px;top:350px;width:82px;height:17px;border:1px dotted #000"></div><div class="t" style="left:878.0px;top:347.5px;font-size:11px;color:#000;">Печать</div><div class="btn" style="left:852px;top:382px;width:90px;height:25px;"></div><svg style="left:866px;top:388px" width="14" height="14" viewBox="0 0 14 14"><path d="M2 2 L12 12 M12 2 L2 12" stroke="#8a0a0a" stroke-width="3.2" stroke-linecap="round"/></svg><div class="t" style="left:887.0px;top:384.5px;font-size:11px;color:#000;transform:scaleX(1.0150);">Закрыть</div><div class="t" style="left:984.0px;top:295.5px;font-size:11px;color:#000;">Удовлетворительный (средний или выше среднего) интегральный уровень развития двигательных функций, скорости и точности переработки</div><div class="t" style="left:970.0px;top:308.5px;font-size:11px;color:#000;transform:scaleX(0.9941);">информации, достаточный для успешного овладения навыками практического вождения (при наличии соответствующей мотивации) в установленные</div><div class="t" style="left:970.0px;top:321.5px;font-size:11px;color:#000;transform:scaleX(0.9764);">сроки.</div><div class="t" style="left:984.0px;top:334.5px;font-size:11px;color:#000;">Субоптимальное сочетание личностных и темпераментальных характеристик. Имеются некоторые предпосылки к формированию аварийно-опасного</div><div class="t" style="left:970.0px;top:347.5px;font-size:11px;color:#000;">стиля вождения, для предупреждения которого может потребоваться проведение дополнительной разъяснительной работы со стороны преподавателей и</div><div class="t" style="left:970.0px;top:360.5px;font-size:11px;color:#000;transform:scaleX(0.9839);">инструкторов (или специальных тренингов).</div><div class="t" style="left:984.0px;top:373.5px;font-size:11px;color:#000;">Уровень психоэмоциональной устойчивости - ниже среднего.</div><div class="t" style="left:984.0px;top:386.5px;font-size:11px;color:#000;transform:scaleX(1.0073);">УЯЗВИМЫЕ КАЧЕСТВА:</div><div class="t" style="left:984.0px;top:399.5px;font-size:11px;color:#000;">Недостаточная способность к быстрому переключению внимания между источниками информации.</div><div class="t" style="left:984.0px;top:412.5px;font-size:11px;color:#000;transform:scaleX(1.0073);">Высокий уровень тревожности, чрезмерное беспокойство даже по незначительным поводам. Повышает вероятность возникновения растерянности,</div><div class="t" style="left:970.0px;top:425.5px;font-size:11px;color:#000;">неадекватных реакций на сложные дорожные ситуации и попадания в ДТП в качестве пассивного участника.</div><div class="t" style="left:984.0px;top:438.5px;font-size:11px;color:#000;">Повышенная вероятность формирования безответственного стиля вождения (типичные проявления - игнорирование ремней безопасности, правил</div><div class="t" style="left:970.0px;top:451.5px;font-size:11px;color:#000;">парковки, проезд на красный свет светофора, неподача сигналов другим участникам движения и др. нарушения ПДД).</div><svg style="left:0;top:0" width="1918" height="1030">
<line x1="1863" y1="495" x2="1850.5" y2="507.5" stroke="#8c8c8c" stroke-width="8.5" stroke-linecap="round"/>
<line x1="1863" y1="495" x2="1850.5" y2="507.5" stroke="#fff" stroke-width="4.5" stroke-linecap="round"/>
<circle cx="1873" cy="483.5" r="14.5" fill="#fff" stroke="#8c8c8c" stroke-width="2.2"/>
<circle cx="1873" cy="483.5" r="9.5" fill="#f0f0f0" stroke="#8c8c8c" stroke-width="2.2"/>
<circle cx="1866" cy="590" r="19" fill="#fff" stroke="#8c8c8c" stroke-width="2.2"/>
<circle cx="1866" cy="590" r="13.5" fill="#f0f0f0" stroke="#8c8c8c" stroke-width="2.2"/>
<circle cx="1875.5" cy="575" r="6.5" fill="#fff" stroke="#8c8c8c" stroke-width="2.2"/>
<circle cx="1851" cy="590" r="6.5" fill="#fff" stroke="#8c8c8c" stroke-width="2.2"/>
<circle cx="1875.5" cy="605" r="6.5" fill="#fff" stroke="#8c8c8c" stroke-width="2.2"/>
<path d="M1845 673 L1889 667.5 L1889 712 L1845 706 Z M1845 689.5 H1889 M1864 670.5 V709" fill="#fff" stroke="#8c8c8c" stroke-width="2.2"/>
<rect x="1853" y="773" width="34.5" height="32.5" rx="11" fill="#fff" stroke="#8c8c8c" stroke-width="2.2"/>
<rect x="1857" y="779.5" width="22.5" height="19.5" rx="5" fill="#f0f0f0" stroke="#8c8c8c" stroke-width="2.2"/>
<rect x="1846" y="781.5" width="20" height="15.5" rx="2" fill="#fff" stroke="#8c8c8c" stroke-width="2.2"/>
<path id="gear" d="M1881.8 892.5 L1886.0 894.6 L1883.6 900.2 L1879.2 898.7 L1875.7 902.2 L1877.2 906.6 L1871.6 909.0 L1869.5 904.8 L1864.5 904.8 L1862.4 909.0 L1856.8 906.6 L1858.3 902.2 L1854.8 898.7 L1850.4 900.2 L1848.0 894.6 L1852.2 892.5 L1852.2 887.5 L1848.0 885.4 L1850.4 879.8 L1854.8 881.3 L1858.3 877.8 L1856.8 873.4 L1862.4 871.0 L1864.5 875.2 L1869.5 875.2 L1871.6 871.0 L1877.2 873.4 L1875.7 877.8 L1879.2 881.3 L1883.6 879.8 L1886.0 885.4 L1881.8 887.5 Z" fill="#fff" stroke="#8c8c8c" stroke-width="2.2" stroke-linejoin="round"/>
<circle cx="1867" cy="890" r="9.5" fill="#f0f0f0" stroke="#8c8c8c" stroke-width="2.2"/>
</svg></body></html>
